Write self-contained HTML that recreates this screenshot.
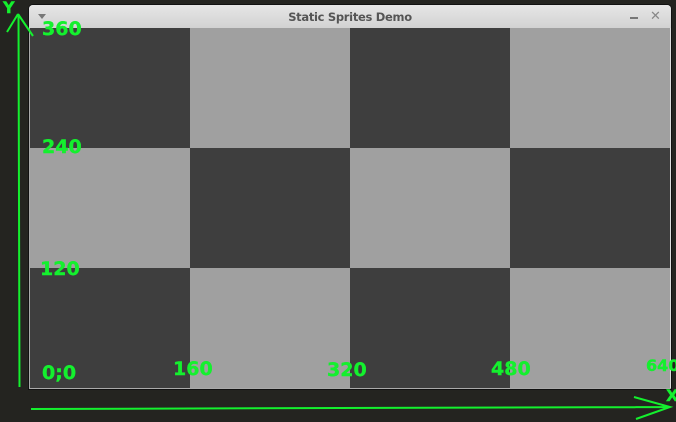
<!DOCTYPE html>
<html><head><style>
html,body{margin:0;padding:0;width:676px;height:422px;overflow:hidden;background:#242420;font-family:"DejaVu Sans","Liberation Sans",sans-serif}
.win{position:absolute;left:29px;top:5px;width:642px;height:384px;background:#dcdcdc;border-radius:4px 4px 0 0;box-shadow:0 0 0 1px #111}
.title{position:absolute;left:0;top:0;width:642px;height:23px;background:linear-gradient(#e6e6e6,#d2d2d2);border-radius:4px 4px 0 0;text-align:center;font:bold 11.5px "DejaVu Sans",sans-serif;color:#555;line-height:24px;letter-spacing:-0.3px}
.content{position:absolute;left:30px;top:28px;width:640px;height:360px;border:0}
.c{position:absolute;width:160px;height:120px}
.d{background:#3e3e3e}.l{background:#a0a0a0}
.t{position:absolute;color:#14f02e;font-weight:bold;font-size:19px;line-height:1;-webkit-text-stroke:0.4px #14f02e}
</style></head><body>
<div class="win"><div class="title">Static Sprites Demo</div>
<div style="position:absolute;left:9px;top:9px;width:0;height:0;border-left:4px solid transparent;border-right:4px solid transparent;border-top:5px solid #777"></div>
<div style="position:absolute;left:601px;top:12px;width:8px;height:2px;background:#777"></div>
<div style="position:absolute;left:621px;top:4px;color:#888;font-size:13px;font-weight:bold">✕</div>
</div>
<div class="content">
<div class="c d" style="left:0;top:0"></div><div class="c l" style="left:160px;top:0"></div><div class="c d" style="left:320px;top:0"></div><div class="c l" style="left:480px;top:0"></div>
<div class="c l" style="left:0;top:120px"></div><div class="c d" style="left:160px;top:120px"></div><div class="c l" style="left:320px;top:120px"></div><div class="c d" style="left:480px;top:120px"></div>
<div class="c d" style="left:0;top:240px"></div><div class="c l" style="left:160px;top:240px"></div><div class="c d" style="left:320px;top:240px"></div><div class="c l" style="left:480px;top:240px"></div>
</div>
<div style="position:absolute;left:29px;top:28px;width:1px;height:361px;background:#aaa"></div>
<div style="position:absolute;left:29px;top:388px;width:642px;height:1px;background:#aaa"></div>
<div class="t" style="left:42px;top:20px">360</div>
<div class="t" style="left:42px;top:138px">240</div>
<div class="t" style="left:40px;top:260px">120</div>
<div class="t" style="left:42px;top:364px">0;0</div>
<div class="t" style="left:173px;top:360px">160</div>
<div class="t" style="left:327px;top:361px">320</div>
<div class="t" style="left:491px;top:360px">480</div>
<div class="t" style="left:646px;top:358px;font-size:16px">640</div>
<div class="t" style="left:3px;top:0px;font-size:16px">Y</div>
<div class="t" style="left:666px;top:388px;font-size:16px">X</div>
<svg width="676" height="422" style="position:absolute;left:0;top:0" fill="none" stroke="#14f02e" stroke-width="2">
<path d="M19.5 387 L18.5 14 M18 14 L7 32 M18 14 L33 36"/>
<path d="M31 409 L670 407 M634 397 L670 407 L636 419"/>
</svg>
</body></html>
